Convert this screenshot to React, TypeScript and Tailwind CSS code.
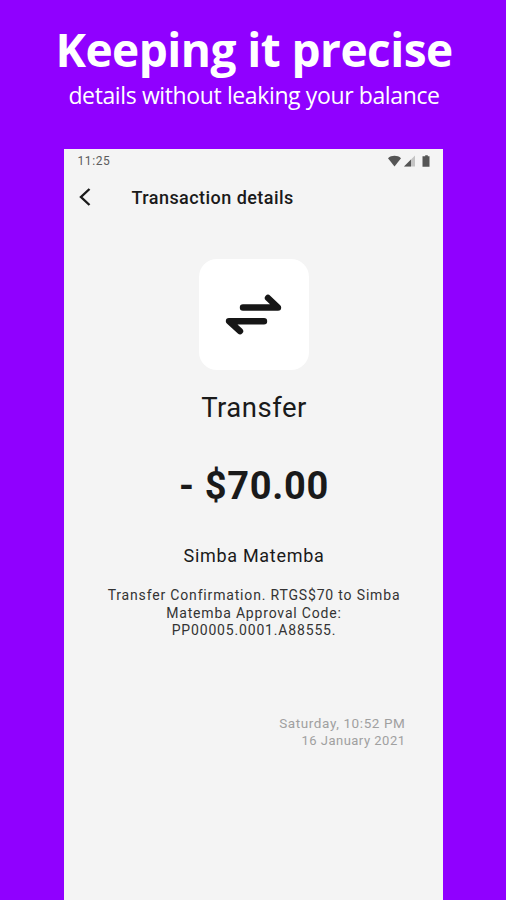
import React from 'react';

interface TransactionData {
  type: string;
  amount: string;
  recipient: string;
  description: string[];
  time: string;
  date: string;
}

const transaction: TransactionData = {
  type: 'Transfer',
  amount: '- $70.00',
  recipient: 'Simba Matemba',
  description: [
    'Transfer Confirmation. RTGS$70 to Simba',
    'Matemba Approval Code:',
    'PP00005.0001.A88555.',
  ],
  time: 'Saturday, 10:52 PM',
  date: '16 January 2021',
};

const StatusBar: React.FC = () => (
  <div className="flex h-6 items-center justify-between pl-3.5 pr-3 text-[#5c5c5c]">
    <span className="text-[12px] leading-4 tracking-[0.6px]">11:25</span>
    <svg width="44" height="12" viewBox="0 0 44 12">
      <path d="M1 3.2C4.5 0 10.500 0 14 3.200L7.500 11.500Z" fill="#555" />
      <path d="M28 0.500V11.500H17Z" fill="#c4c4c4" />
      <path d="M24 4.500V11.500H17Z" fill="#555" />
      <path d="M36.500 1.200H38.200V0.200H40.800V1.200H42.500V11.800H35.500V1.200Z" fill="#555" />
    </svg>
  </div>
);

const TransferIcon: React.FC = () => (
  <svg
    width="110"
    height="111"
    viewBox="0 0 110 111"
    fill="none"
    stroke="#161616"
    strokeWidth="6.4"
    strokeLinecap="round"
    strokeLinejoin="round"
  >
    <path d="M44 48.500H79L69 39" />
    <path d="M65 62.200H30L41 72.200" />
  </svg>
);

export default function App() {
  return (
    <div className="flex h-[900px] w-[506px] flex-col items-center overflow-hidden bg-[#9000ff]">
      <header className="flex h-[149px] shrink-0 flex-col items-center whitespace-nowrap pl-0.5 pt-[18px] font-['Open_Sans',sans-serif] text-white">
        <h1 className="text-[46px] font-bold leading-[62px] tracking-[-0.55px]">Keeping it precise</h1>
        <p className="-mt-px text-[23px] leading-8 tracking-[-0.38px]">details without leaking your balance</p>
      </header>

      <main className="flex w-[379px] flex-1 flex-col bg-[#f4f4f4] font-[Roboto,sans-serif] text-[#1a1a1a]">
        <StatusBar />

        <div className="flex h-12 items-center pl-[15px]">
          <svg width="12" height="20" viewBox="0 0 12 20" fill="none" stroke="#1a1a1a" strokeWidth="2.4">
            <path d="M10.500 2L2 10L10.500 18" />
          </svg>
          <h2 className="ml-[41px] mt-0.5 whitespace-nowrap text-[18px] font-medium leading-6 tracking-[0.45px]">
            Transaction details
          </h2>
        </div>

        <section className="flex flex-col items-center whitespace-nowrap pl-0.5 pt-[38px]">
          <div className="h-[111px] w-[110px] rounded-[18px] bg-white">
            <TransferIcon />
          </div>
          <p className="mt-[18px] text-[27.500px] leading-10 tracking-[0.5px]">{transaction.type}</p>
          <p className="mt-[34px] text-[38px] font-bold leading-[48px] tracking-[0.7px]">
            {transaction.amount}
          </p>
          <p className="mt-[34px] text-[18px] leading-6 tracking-[0.7px]">{transaction.recipient}</p>
          <div className="mt-[19px] text-center text-[14px] leading-[17.500px] tracking-[0.83px] text-[#333]">
            {transaction.description.map((line) => (
              <p key={line}>{line}</p>
            ))}
          </div>
        </section>

        <footer className="mt-[74px] whitespace-nowrap pr-[37px] text-right text-[#a0a0a0]">
          <p className="text-[13.500px] leading-[18px] tracking-[0.6px]">{transaction.time}</p>
          <p className="text-[13px] leading-[18px] tracking-[0.5px]">{transaction.date}</p>
        </footer>
      </main>
    </div>
  );
}
